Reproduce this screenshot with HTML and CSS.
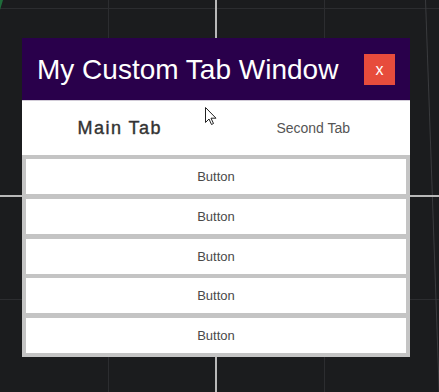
FILE: index.html
```html
<!DOCTYPE html>
<html>
<head>
<meta charset="utf-8">
<link rel="stylesheet" href="styles.css">
</head>
<body>
<div class="viewport">
  <div class="grid-line h-top"></div>
  <div class="grid-line h-bottom"></div>
  <div class="grid-line v-left"></div>
  <div class="grid-line v-right"></div>
  <div class="grid-line slant"></div>
  <div class="corner"></div>
  <div class="axis axis-v"></div>
  <div class="axis axis-h"></div>

  <div class="window">
    <div class="header">
      <span class="title">My Custom Tab Window</span>
      <button class="close">x</button>
    </div>
    <div class="tabs">
      <div class="tab tab-active">Main Tab</div>
      <div class="tab">Second Tab</div>
    </div>
    <div class="content">
      <div class="btn">Button</div>
      <div class="btn">Button</div>
      <div class="btn">Button</div>
      <div class="btn">Button</div>
      <div class="btn">Button</div>
    </div>
  </div>

  <svg class="cursor" width="12" height="19" viewBox="0 0 12 19">
    <path d="M0.5 0.5 L0.5 15.5 L4 12 L6.5 17.5 L8.5 16.5 L6 11.2 L11 11.2 Z" fill="#fff" stroke="#222" stroke-width="1"/>
  </svg>
</div>
</body>
</html>
```
FILE: styles.css
```css
html, body {
  margin: 0;
  padding: 0;
  background: #1b1c1e;
}
.viewport {
  position: relative;
  width: 439px;
  height: 392px;
  overflow: hidden;
  background: #1b1c1e;
  padding: 38px 0 0 22px;
  box-sizing: border-box;
  font-family: "Liberation Sans", Arial, sans-serif;
}
.grid-line {
  position: absolute;
  background: #2c2d30;
}
.h-top { left: 0; right: 0; top: 8px; height: 1px; }
.h-bottom { left: 0; right: 0; top: 299px; height: 1px; }
.v-left { top: 0; bottom: 0; left: 108px; width: 1px; }
.v-right { top: 0; bottom: 0; left: 324px; width: 1px; }
.slant { top: -10px; height: 420px; left: 432px; width: 1px; transform: rotate(-2deg); background: #3a3b3e; }
.corner {
  position: absolute;
  left: 0; top: 0;
  width: 0; height: 0;
  border-left: 3px solid #1f6b3a;
  border-bottom: 10px solid transparent;
}
.axis {
  position: absolute;
  background: #b8b8b8;
}
.axis-v { left: 215px; top: 0; bottom: 0; width: 2px; }
.axis-h { top: 195px; left: 0; right: 0; height: 2px; }

.window {
  position: relative;
  width: 388px;
  display: flex;
  flex-direction: column;
}
.header {
  height: 62px;
  background: #29004b;
  display: flex;
  align-items: center;
  justify-content: space-between;
  padding: 0 15px 0 15px;
  border-bottom: 1px solid #d2ccd8;
}
.title {
  color: #ffffff;
  font-size: 28px;
  line-height: 1;
  padding-top: 2px;
}
.close {
  width: 31px;
  height: 31px;
  border: none;
  background: #e74c3c;
  color: #fff;
  font-family: "Liberation Sans", Arial, sans-serif;
  font-size: 16px;
  padding: 0;
  margin-top: 1px;
}
.tabs {
  height: 54px;
  background: #ffffff;
  display: flex;
}
.tab {
  flex: 1;
  display: flex;
  align-items: center;
  justify-content: center;
  color: #555;
  font-size: 14px;
}
.tab-active {
  color: #333;
  font-size: 18px;
  font-weight: normal;
  -webkit-text-stroke: 0.4px #333;
  letter-spacing: 1.5px;
  padding-left: 1px;
}
.content {
  background: #c4c4c4;
  padding: 4px;
  display: flex;
  flex-direction: column;
  gap: 4.75px;
}
.btn {
  height: 35px;
  background: #ffffff;
  display: flex;
  align-items: center;
  justify-content: center;
  color: #4a4a4a;
  font-size: 13px;
}
.cursor {
  position: absolute;
  left: 205px;
  top: 107px;
}
```
